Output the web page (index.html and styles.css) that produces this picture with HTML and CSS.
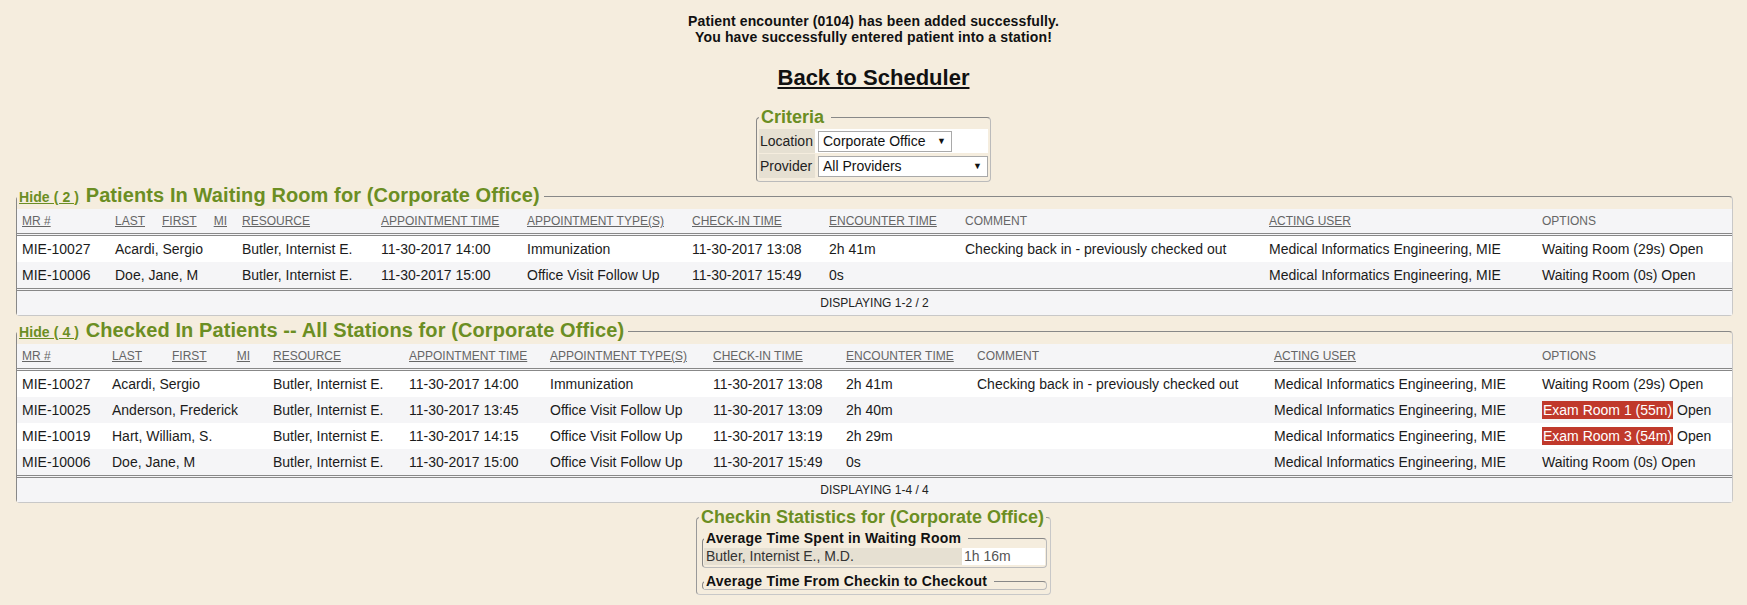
FILE: index.html
```html
<!DOCTYPE html>
<html>
<head>
<meta charset="utf-8">
<title>Checkin</title>
<link rel="stylesheet" href="styles.css">
</head>
<body>
<div class="msg">Patient encounter (0104) has been added successfully.<br>You have successfully entered patient into a station!</div>
<div class="back"><a href="#">Back to Scheduler</a></div>

<fieldset class="criteria">
  <legend>Criteria</legend>
  <table class="crit-table">
    <tr>
      <td class="lbl">Location</td>
      <td class="val val-white"><span class="sel sel-loc"><span>Corporate Office</span><span class="arr">&#9660;</span></span></td>
    </tr>
    <tr>
      <td class="lbl">Provider</td>
      <td class="val"><span class="sel sel-prov"><span>All Providers</span><span class="arr">&#9660;</span></span></td>
    </tr>
  </table>
</fieldset>

<fieldset class="panel panel-wait">
  <legend><a href="#" class="hide">Hide ( 2 )</a> <span class="ptitle">Patients In Waiting Room for (Corporate Office)</span></legend>
  <table class="grid grid1">
    <colgroup>
      <col class="c1"><col class="c2"><col class="c3"><col class="c4"><col class="c5"><col class="c6"><col class="c7"><col class="c8"><col class="c9"><col class="c10">
    </colgroup>
    <thead>
      <tr>
        <th><a href="#">MR #</a></th>
        <th><div class="names"><a href="#">LAST</a><a href="#">FIRST</a><a href="#">MI</a></div></th>
        <th><a href="#">RESOURCE</a></th>
        <th><a href="#">APPOINTMENT TIME</a></th>
        <th><a href="#">APPOINTMENT TYPE(S)</a></th>
        <th><a href="#">CHECK-IN TIME</a></th>
        <th><a href="#">ENCOUNTER TIME</a></th>
        <th>COMMENT</th>
        <th><a href="#">ACTING USER</a></th>
        <th>OPTIONS</th>
      </tr>
    </thead>
    <tbody>
      <tr>
        <td>MIE-10027</td><td>Acardi, Sergio</td><td>Butler, Internist E.</td><td>11-30-2017 14:00</td><td>Immunization</td><td>11-30-2017 13:08</td><td>2h 41m</td><td>Checking back in - previously checked out</td><td>Medical Informatics Engineering, MIE</td><td>Waiting Room (29s) Open</td>
      </tr>
      <tr class="alt">
        <td>MIE-10006</td><td>Doe, Jane, M</td><td>Butler, Internist E.</td><td>11-30-2017 15:00</td><td>Office Visit Follow Up</td><td>11-30-2017 15:49</td><td>0s</td><td></td><td>Medical Informatics Engineering, MIE</td><td>Waiting Room (0s) Open</td>
      </tr>
    </tbody>
    <tfoot>
      <tr><td colspan="10" class="foot">DISPLAYING 1-2 / 2</td></tr>
    </tfoot>
  </table>
</fieldset>

<fieldset class="panel panel-checked">
  <legend><a href="#" class="hide">Hide ( 4 )</a> <span class="ptitle">Checked In Patients -- All Stations for (Corporate Office)</span></legend>
  <table class="grid grid2">
    <colgroup>
      <col class="c1"><col class="c2"><col class="c3"><col class="c4"><col class="c5"><col class="c6"><col class="c7"><col class="c8"><col class="c9"><col class="c10">
    </colgroup>
    <thead>
      <tr>
        <th><a href="#">MR #</a></th>
        <th><div class="names"><a href="#">LAST</a><a href="#">FIRST</a><a href="#">MI</a></div></th>
        <th><a href="#">RESOURCE</a></th>
        <th><a href="#">APPOINTMENT TIME</a></th>
        <th><a href="#">APPOINTMENT TYPE(S)</a></th>
        <th><a href="#">CHECK-IN TIME</a></th>
        <th><a href="#">ENCOUNTER TIME</a></th>
        <th>COMMENT</th>
        <th><a href="#">ACTING USER</a></th>
        <th>OPTIONS</th>
      </tr>
    </thead>
    <tbody>
      <tr>
        <td>MIE-10027</td><td>Acardi, Sergio</td><td>Butler, Internist E.</td><td>11-30-2017 14:00</td><td>Immunization</td><td>11-30-2017 13:08</td><td>2h 41m</td><td>Checking back in - previously checked out</td><td>Medical Informatics Engineering, MIE</td><td>Waiting Room (29s) Open</td>
      </tr>
      <tr class="alt">
        <td>MIE-10025</td><td>Anderson, Frederick</td><td>Butler, Internist E.</td><td>11-30-2017 13:45</td><td>Office Visit Follow Up</td><td>11-30-2017 13:09</td><td>2h 40m</td><td></td><td>Medical Informatics Engineering, MIE</td><td><span class="late">Exam Room 1 (55m)</span> Open</td>
      </tr>
      <tr>
        <td>MIE-10019</td><td>Hart, William, S.</td><td>Butler, Internist E.</td><td>11-30-2017 14:15</td><td>Office Visit Follow Up</td><td>11-30-2017 13:19</td><td>2h 29m</td><td></td><td>Medical Informatics Engineering, MIE</td><td><span class="late">Exam Room 3 (54m)</span> Open</td>
      </tr>
      <tr class="alt">
        <td>MIE-10006</td><td>Doe, Jane, M</td><td>Butler, Internist E.</td><td>11-30-2017 15:00</td><td>Office Visit Follow Up</td><td>11-30-2017 15:49</td><td>0s</td><td></td><td>Medical Informatics Engineering, MIE</td><td>Waiting Room (0s) Open</td>
      </tr>
    </tbody>
    <tfoot>
      <tr><td colspan="10" class="foot">DISPLAYING 1-4 / 4</td></tr>
    </tfoot>
  </table>
</fieldset>

<fieldset class="stats">
  <legend>Checkin Statistics for (Corporate Office)</legend>
  <fieldset class="sub">
    <legend>Average Time Spent in Waiting Room</legend>
    <table class="avg">
      <tr><td class="who">Butler, Internist E., M.D.</td><td class="dur">1h 16m</td></tr>
    </table>
  </fieldset>
  <fieldset class="sub sub-empty">
    <legend>Average Time From Checkin to Checkout</legend>
  </fieldset>
</fieldset>
</body>
</html>
```

FILE: styles.css
```css
html, body {
  margin: 0;
  padding: 0;
}

body {
  background: #f5edde;
  font-family: "Liberation Sans", Arial, sans-serif;
  color: #1b1b1b;
}

a {
  color: inherit;
}

/* ---------- top messages ---------- */
.msg {
  text-align: center;
  font-weight: bold;
  font-size: 14px;
  line-height: 16px;
  letter-spacing: 0.15px;
  padding-top: 13px;
  color: #111;
}

.back {
  text-align: center;
  margin-top: 20px;
  font-size: 22px;
  font-weight: bold;
  line-height: 26px;
}

.back a {
  color: #111;
  text-decoration: underline;
  text-decoration-thickness: 2px;
  text-underline-offset: 2px;
}

/* ---------- fieldset reset ---------- */
fieldset {
  min-width: 0;
  box-sizing: border-box;
  border: 1px solid;
  border-radius: 4px;
}

/* ---------- criteria ---------- */
.criteria {
  width: 235px;
  margin: 16px auto 0;
  padding: 0 2px 2px;
  border-color: #888 #bbb #bbb #888;
}

.criteria legend {
  padding: 0 7px 0 2px;
  font-size: 18px;
  line-height: 21px;
  font-weight: bold;
  color: #6b8e23;
}

.crit-table {
  width: 100%;
  border-collapse: separate;
  border-spacing: 0 1px;
}

.crit-table td {
  height: 24px;
  padding: 0;
  vertical-align: middle;
  font-size: 14px;
}

.crit-table .lbl {
  width: 53px;
  padding: 0 2px 0 1px;
  background: #e6e0d2;
  color: #222;
  white-space: nowrap;
}

.crit-table .val {
  padding-left: 3px;
}

.crit-table .val-white {
  background: #fff;
}

.sel {
  display: inline-flex;
  align-items: center;
  justify-content: space-between;
  box-sizing: border-box;
  height: 21px;
  padding: 0 5px 0 4px;
  border: 1px solid #a9a9a9;
  background: #fff;
  font-size: 14px;
  color: #111;
  vertical-align: middle;
}

.sel-loc {
  width: 134px;
}

.sel-prov {
  width: 170px;
}

.arr {
  font-size: 9px;
  line-height: 1;
}

/* ---------- panels ---------- */
.panel {
  margin: 2px 14px 0 16px;
  padding: 0;
  border-color: #888 #c8c8c8 #c8c8c8 #888;
}

.panel-checked {
  margin-top: 3px;
}

.panel legend {
  padding: 0 4px 0 2px;
  font-size: 20px;
  line-height: 23px;
  white-space: nowrap;
}

.hide {
  font-size: 14px;
  font-weight: bold;
  color: #6b8e23;
  text-decoration: underline;
  letter-spacing: 0.1px;
}

.ptitle {
  font-size: 20px;
  font-weight: bold;
  color: #6b8e23;
  margin-left: 1px;
  letter-spacing: 0.1px;
}

.grid {
  width: 100%;
  table-layout: fixed;
  border-collapse: separate;
  border-spacing: 0;
}

.grid th {
  padding: 0 5px;
  line-height: 24px;
  font-size: 12px;
  font-weight: normal;
  text-align: left;
  color: #666;
  background: #f5f5f7;
  border-bottom: 3px double #888;
  white-space: nowrap;
  overflow: hidden;
}

.grid th a {
  color: #666;
  text-decoration: underline;
}

.names {
  display: flex;
  justify-content: space-between;
}

.grid1 .names { width: 112px; }
.grid2 .names { width: 138px; }

.grid td {
  padding: 0 5px;
  line-height: 26px;
  font-size: 14px;
  background: #fff;
  white-space: nowrap;
  overflow: hidden;
}

.grid tr.alt td {
  background: #f5f5f7;
}

.grid td.foot {
  text-align: center;
  font-size: 12px;
  line-height: 24px;
  color: #222;
  background: #f5f5f7;
  border-top: 3px double #888;
}

.late {
  background: #c0392b;
  color: #fff;
  padding: 1px 1px;
}

.grid1 .c1 { width: 93px; }
.grid1 .c2 { width: 127px; }
.grid1 .c3 { width: 139px; }
.grid1 .c4 { width: 146px; }
.grid1 .c5 { width: 165px; }
.grid1 .c6 { width: 137px; }
.grid1 .c7 { width: 136px; }
.grid1 .c8 { width: 304px; }
.grid1 .c9 { width: 273px; }
.grid1 .c10 { width: 195px; }

.grid2 .c1 { width: 90px; }
.grid2 .c2 { width: 161px; }
.grid2 .c3 { width: 136px; }
.grid2 .c4 { width: 141px; }
.grid2 .c5 { width: 163px; }
.grid2 .c6 { width: 133px; }
.grid2 .c7 { width: 131px; }
.grid2 .c8 { width: 297px; }
.grid2 .c9 { width: 268px; }
.grid2 .c10 { width: 195px; }

/* ---------- statistics ---------- */
.stats {
  width: 355px;
  margin: 4px auto 0;
  padding: 0 2px 4px;
  border-color: #999 #c8c8c8 #c8c8c8 #999;
}

.stats > legend {
  padding: 0 2px;
  font-size: 18px;
  line-height: 21px;
  font-weight: bold;
  color: #6b8e23;
}

.sub {
  margin: 2px 1px 0 3px;
  padding: 0 1px 2px;
  border-color: #888 #bbb #bbb #888;
}

.sub legend {
  padding: 0 7px 0 2px;
  font-size: 14px;
  line-height: 16px;
  font-weight: bold;
  color: #111;
  letter-spacing: 0.22px;
}

.sub-empty {
  margin-top: 5px;
  padding-bottom: 0;
}

.avg {
  width: 100%;
  border-collapse: collapse;
  margin-top: 2px;
}

.avg td {
  padding: 0 2px;
  font-size: 14px;
  line-height: 17px;
}

.avg .who {
  width: 254px;
  background: #e6e0d2;
  color: #333;
}

.avg .dur {
  background: #fff;
  color: #555;
}
```
